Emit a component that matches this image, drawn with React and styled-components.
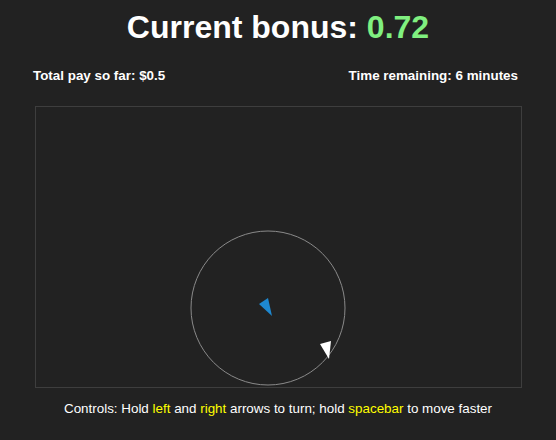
import styled, { createGlobalStyle } from "styled-components";

const GlobalStyle = createGlobalStyle`
  body {
    margin: 0;
    background: #222222;
    font-family: "Liberation Sans", Arial, Helvetica, sans-serif;
    color: #ffffff;
  }
`;

const Page = styled.div`
  width: 556px;
  height: 440px;
  display: flex;
  flex-direction: column;
  align-items: center;
`;

const Title = styled.h1`
  margin: 9px 0 0;
  font-size: 32px;
  font-weight: bold;
  line-height: 37px;
  text-align: center;
`;

const Bonus = styled.span`
  color: #80f080;
`;

const StatsRow = styled.div`
  width: 100%;
  box-sizing: border-box;
  display: flex;
  justify-content: space-between;
  padding: 0 38px 0 33px;
  margin-top: 22px;
  font-size: 13.4px;
  font-weight: bold;
  line-height: 16px;
`;

const Arena = styled.div`
  margin-top: 22px;
  width: 487px;
  height: 282px;
  box-sizing: border-box;
  border: 1px solid #3e3e3e;
`;

const Controls = styled.p`
  margin: 13px 0 0;
  font-size: 13.4px;
  line-height: 16px;
  text-align: center;
`;

const Key = styled.span`
  color: #ffff00;
`;

const App = () => {
  return (
    <Page>
      <GlobalStyle />
      <Title>
        Current bonus: <Bonus>0.72</Bonus>
      </Title>
      <StatsRow>
        <span>Total pay so far: $0.5</span>
        <span>Time remaining: 6 minutes</span>
      </StatsRow>
      <Arena>
        <svg width="485" height="280" viewBox="0 0 485 280">
          <circle cx="232" cy="201" r="77" fill="none" stroke="#8a8a8a" strokeWidth="1" />
          <polygon points="223,197 232,191 236,209" fill="#1e88d0" />
          <polygon points="284,237 295,234 293,252" fill="#ffffff" />
        </svg>
      </Arena>
      <Controls>
        Controls: Hold <Key>left</Key> and <Key>right</Key> arrows to turn; hold{" "}
        <Key>spacebar</Key> to move faster
      </Controls>
    </Page>
  );
};

export default App;
